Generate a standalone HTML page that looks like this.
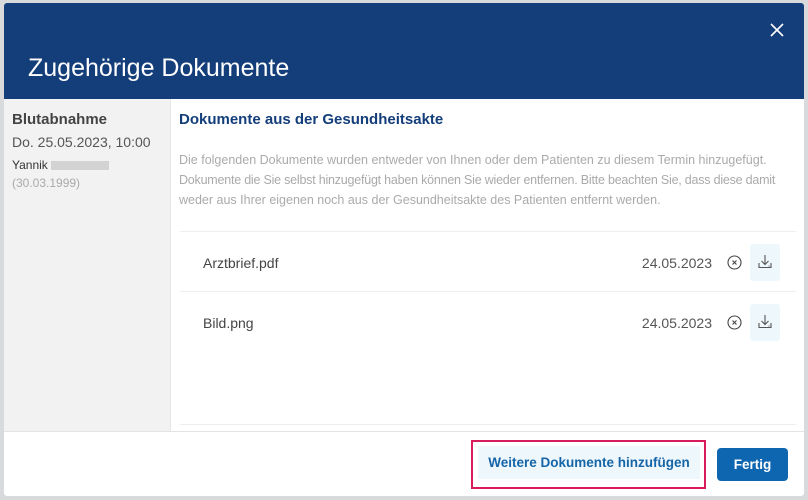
<!DOCTYPE html>
<html><head><meta charset="utf-8"><style>
*{box-sizing:border-box;margin:0;padding:0}
body{width:808px;height:500px;background:#d9dadc;font-family:"Liberation Sans",sans-serif;position:relative;overflow:hidden}
.modal{position:absolute;left:4px;top:3px;width:800px;height:493px;background:#fff;border-radius:3px;overflow:hidden}
.hdr{height:96px;background:#143e7a;position:relative}
.hdr h1{position:absolute;left:24px;top:51px;font-size:25px;font-weight:normal;color:#fff}
.x{position:absolute;right:20px;top:20px}
.left{position:absolute;left:0;top:96px;width:167px;height:332px;background:#f2f2f2;border-right:1px solid #e6e6e6;padding:12px 8px}
.right{position:absolute;left:167px;top:96px;right:0;height:332px}
.foot{position:absolute;left:0;right:0;top:428px;bottom:0;border-top:1px solid #e4e4e4}
.row{position:absolute;left:9px;right:8px;height:60px;border-top:1px solid #eee;font-size:14px;color:#444}
.dl{position:absolute;right:16px;top:12px;width:30px;height:37px;background:#eef7fb;border-radius:3px}
</style></head><body>
<div class="modal">
<div class="hdr"><h1>Zugehörige Dokumente</h1>
<svg class="x" width="14" height="14" viewBox="0 0 14 14"><path d="M1 1L13 13M13 1L1 13" stroke="#fff" stroke-width="1.6"/></svg></div>
<div class="left">
<div style="font-size:15px;font-weight:bold;color:#444">Blutabnahme</div>
<div style="font-size:14px;color:#555;margin-top:6px">Do. 25.05.2023, 10:00</div>
<div style="font-size:12px;color:#333;margin-top:8px">Yannik <span style="display:inline-block;width:58px;height:9px;background:#d3d3d3;vertical-align:middle"></span></div>
<div style="font-size:12px;color:#aaa;margin-top:4px">(30.03.1999)</div>
</div>
<div class="right">
<div style="position:absolute;left:8px;top:12px;font-size:15px;font-weight:bold;color:#143e7a">Dokumente aus der Gesundheitsakte</div>
<div style="position:absolute;left:8px;top:51px;white-space:nowrap;font-size:12.5px;line-height:20px;color:#aaa">Die folgenden Dokumente wurden entweder von Ihnen oder dem Patienten zu diesem Termin hinzugefügt.<br><span style="letter-spacing:-0.22px">Dokumente die Sie selbst hinzugefügt haben können Sie wieder entfernen. Bitte beachten Sie, dass diese damit</span><br>weder aus Ihrer eigenen noch aus der Gesundheitsakte des Patienten entfernt werden.</div>
<div class="row" style="top:132px"><span style="position:absolute;left:23px;top:23px">Arztbrief.pdf</span><span style="position:absolute;right:84px;top:23px;color:#555">24.05.2023</span>
<svg style="position:absolute;right:54px;top:23px" width="15" height="15" viewBox="0 0 15 15"><circle cx="7.5" cy="7.5" r="6.5" fill="none" stroke="#444" stroke-width="1.1"/><path d="M5.5 5.5L9.5 9.5M9.5 5.5L5.5 9.5" stroke="#444" stroke-width="1.1"/></svg>
<div class="dl"><svg style="position:absolute;left:8px;top:11px" width="14" height="14" viewBox="0 0 14 14"><path d="M7 0V9M3.5 6L7 9.5L10.5 6M1 8V12.5H13V8M10.5 11H11.5" fill="none" stroke="#555" stroke-width="1.1"/></svg></div></div>
<div class="row" style="top:192px"><span style="position:absolute;left:23px;top:23px">Bild.png</span><span style="position:absolute;right:84px;top:23px;color:#555">24.05.2023</span>
<svg style="position:absolute;right:54px;top:23px" width="15" height="15" viewBox="0 0 15 15"><circle cx="7.5" cy="7.5" r="6.5" fill="none" stroke="#444" stroke-width="1.1"/><path d="M5.5 5.5L9.5 9.5M9.5 5.5L5.5 9.5" stroke="#444" stroke-width="1.1"/></svg>
<div class="dl"><svg style="position:absolute;left:8px;top:11px" width="14" height="14" viewBox="0 0 14 14"><path d="M7 0V9M3.5 6L7 9.5L10.5 6M1 8V12.5H13V8M10.5 11H11.5" fill="none" stroke="#555" stroke-width="1.1"/></svg></div></div>
<div class="row" style="top:325px;height:1px"></div>
</div>
<div class="foot">
<div style="position:absolute;left:467px;top:8px;width:235px;height:49px;border:2px solid #d81b5a;padding:4px 12px"><div style="background:#eef7fb;height:33px;line-height:33px;font-size:13.5px;font-weight:bold;color:#1565a8;text-align:center;margin-left:-7px;margin-right:-8px">Weitere Dokumente hinzufügen</div></div>
<div style="position:absolute;left:713px;top:16px;width:71px;height:33px;background:#0f66b0;border-radius:4px;color:#fff;font-size:13.5px;font-weight:bold;text-align:center;line-height:33px">Fertig</div>
</div>
</div>
</body></html>
